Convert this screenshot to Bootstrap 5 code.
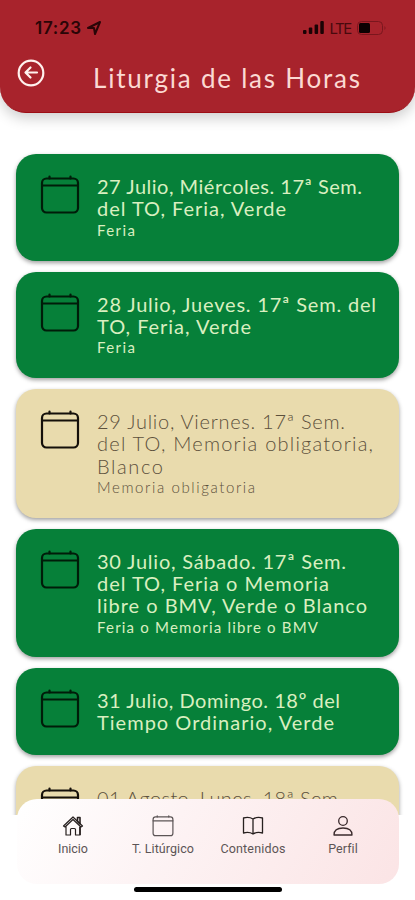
<!DOCTYPE html>
<html lang="es">
<head>
<meta charset="utf-8">
<meta name="viewport" content="width=device-width, initial-scale=1">
<title>Liturgia de las Horas</title>
<link href="https://cdn.jsdelivr.net/npm/bootstrap@5.3.0/dist/css/bootstrap.min.css" rel="stylesheet">
<style>
body{font-family:Lato,"Liberation Sans",sans-serif;background:#fff}
.phone{width:415px;height:900px}
.top-bar{height:113px;background:#a8232c;border-radius:0 0 26px 26px;box-shadow:0 5px 14px rgba(0,0,0,.2);border-bottom:1px solid #9c0d14}
.status{height:56px;padding:0 28px 0 35px;color:#2a0507}
.ln{display:block;width:max-content;white-space:pre;font-size:20px;line-height:22.4px}
.clock{font:600 17px Inter,sans-serif}
.lte{font:15px Inter,sans-serif;color:#480a0e}
.page-title{font-size:26px;line-height:34px;font-weight:400;color:#fbd9d3;margin:5px 0 0 48px}
.back{margin:2px 0 0 17px}
.days{height:702px;padding:41px 16px 0}
.day{flex:none;border:0;border-radius:20px;box-shadow:0 2px 4px rgba(0,0,0,.38);padding:22px 20px 0 24px;background:#068039;color:#d9efc0;margin-bottom:11px}
.day.sand{background:#e9dbad}
.h-short{height:87px}.h-mid{height:106.5px}.h-tall{height:128.5px}
.cal{width:40px;height:40px;flex:none;color:#001c09;margin-top:-1px}
.sand .cal{color:#15100a}
.words{margin-left:17px;margin-top:-1px}
.sub{font-size:15px;line-height:21px}
.sand .ln{font-weight:300;color:#5c503c}
.tabs{height:85px;margin:-16px 16px 0 17px;border-radius:20px;background:linear-gradient(120deg,#fff 0%,#fdf3f4 40%,#fbe4e5 100%);position:relative;padding:16px 11px 0}
.tab{width:90px;font:12px/17px Roboto,sans-serif;color:#5c5556}
.tab svg{width:22px;height:22px;margin-bottom:3px}
.tab .ln{font-size:12.5px;line-height:18px}
.home-bar{width:148px;height:5px;margin-top:3px;border-radius:3px;background:#000}
</style>
<script src="https://cdn.jsdelivr.net/npm/bootstrap@5.3.0/dist/js/bootstrap.bundle.min.js"></script>
</head>
<body>
<svg width="0" height="0" class="d-none">
<symbol id="calendar" viewBox="0 0 40 40"><g fill="none" stroke="currentColor" stroke-width="2.200" stroke-linecap="round"><rect x="2" y="3.500" width="36" height="34" rx="4.500"/><path d="M2 10.500H38M9.500 1.500v2M30.500 1.500v2"/></g></symbol>
</svg>
<div class="phone overflow-hidden d-flex flex-column">
  <header class="top-bar flex-shrink-0">
    <div class="status d-flex align-items-center">
      <span class="ln clock" data-w="46">17:23</span>
      <svg class="ms-1" width="16" height="16" viewBox="0 0 16 16"><path d="M2 8 14 2 9 14 8 8Z" fill="none" stroke="#2a0507" stroke-width="2" stroke-linejoin="round"/></svg>
      <svg class="ms-auto" width="22" height="14" viewBox="0 0 22 14" fill="#1b0305"><rect x="0" y="9" width="3.500" height="4" rx="1"/><rect x="5.800" y="6.500" width="3.500" height="6.500" rx="1"/><rect x="11.600" y="3.500" width="3.500" height="9.500" rx="1"/><rect x="17.300" y="0" width="3.500" height="13" rx="1"/></svg>
      <span class="ln lte ms-1" data-w="23">LTE</span>
      <svg style="margin-left:5px" width="31" height="16" viewBox="0 0 31 16"><rect x="1.500" y="1.500" width="25" height="13" rx="4" fill="none" stroke="#7a161d"/><rect x="3" y="3" width="11" height="10" rx="1.500" fill="#0d0102"/><path d="M28.500 6q2 2 0 4Z" fill="#7a161d"/></svg>
    </div>
    <div class="d-flex align-items-start">
      <svg class="back" width="28" height="30" viewBox="0 0 28 30" fill="none" stroke="#fff1ee" stroke-width="2.200" stroke-linecap="round" stroke-linejoin="round"><circle cx="14" cy="15" r="12.300"/><path d="M20 14.500H9M13.500 9.500l-5 5 5 5"/></svg>
      <h1 class="ln page-title" data-w="267">Liturgia de las Horas</h1>
    </div>
  </header>
  <main class="days d-flex flex-column overflow-hidden flex-shrink-0">
    <article class="day card flex-row h-mid"><svg class="cal"><use href="#calendar"/></svg><div class="words"><span class="ln" data-w="265">27 Julio, Miércoles. 17ª Sem.</span><span class="ln" data-w="189">del TO, Feria, Verde</span><span class="ln sub" data-w="38">Feria</span></div></article>
    <article class="day card flex-row h-mid"><svg class="cal"><use href="#calendar"/></svg><div class="words"><span class="ln" data-w="279">28 Julio, Jueves. 17ª Sem. del</span><span class="ln" data-w="154">TO, Feria, Verde</span><span class="ln sub" data-w="38">Feria</span></div></article>
    <article class="day card flex-row h-tall sand"><svg class="cal"><use href="#calendar"/></svg><div class="words"><span class="ln" data-w="248">29 Julio, Viernes. 17ª Sem.</span><span class="ln" data-w="276">del TO, Memoria obligatoria,</span><span class="ln" data-w="66">Blanco</span><span class="ln sub" data-w="158">Memoria obligatoria</span></div></article>
    <article class="day card flex-row h-tall"><svg class="cal"><use href="#calendar"/></svg><div class="words"><span class="ln" data-w="249">30 Julio, Sábado. 17ª Sem.</span><span class="ln" data-w="232">del TO, Feria o Memoria</span><span class="ln" data-w="270">libre o BMV, Verde o Blanco</span><span class="ln sub" data-w="221">Feria o Memoria libre o BMV</span></div></article>
    <article class="day card flex-row h-short"><svg class="cal"><use href="#calendar"/></svg><div class="words"><span class="ln" data-w="243">31 Julio, Domingo. 18º del</span><span class="ln" data-w="237">Tiempo Ordinario, Verde</span></div></article>
    <article class="day card flex-row h-mid sand"><svg class="cal"><use href="#calendar"/></svg><div class="words"><span class="ln" data-w="246">01 Agosto, Lunes. 18ª Sem.</span></div></article>
  </main>
  <nav class="tabs d-flex flex-shrink-0">
    <div class="tab d-flex flex-column align-items-center"><svg viewBox="0 0 22 22" fill="none" stroke="#27201f" stroke-width="1.200" stroke-linejoin="round"><path d="M1.500 11 11 2l9.500 9-1.500 1-8-7.500L3 12ZM4 11.500V20h4.500v-5.500q0-1 1-1h3q1 0 1 1V20H18v-8.500"/><path d="M15.500 2.500v4l2.500 2.300V2.500ZM18 12v8" stroke-width="1.600"/></svg><span class="ln" data-w="30">Inicio</span></div>
    <div class="tab d-flex flex-column align-items-center"><svg viewBox="0 0 40 40"><use href="#calendar"/></svg><span class="ln" data-w="62">T. Litúrgico</span></div>
    <div class="tab d-flex flex-column align-items-center"><svg viewBox="0 0 22 22" fill="none" stroke="#27201f" stroke-width="1.300" stroke-linejoin="round"><path d="M11 4Q7 1.500 1.500 3v15Q7 16.500 11 19q4-2.500 9.500-1V3Q15 1.500 11 4v15"/></svg><span class="ln" data-w="65">Contenidos</span></div>
    <div class="tab d-flex flex-column align-items-center"><svg viewBox="0 0 22 22" fill="none" stroke="#3a2a2c" stroke-width="1.300" stroke-linejoin="round"><circle cx="11" cy="6" r="4.300"/><path d="M2 20q0-7 9-7t9 7Z"/></svg><span class="ln" data-w="29">Perfil</span></div>
  </nav>
  <div class="home-bar mx-auto flex-shrink-0"></div>
</div>
<script>
document.querySelectorAll('[data-w]').forEach(function(el){
  var n = el.textContent.length;
  el.style.letterSpacing = (el.dataset.w - el.getBoundingClientRect().width) / (n - 1) + 'px';
});
</script>
</body>
</html>
